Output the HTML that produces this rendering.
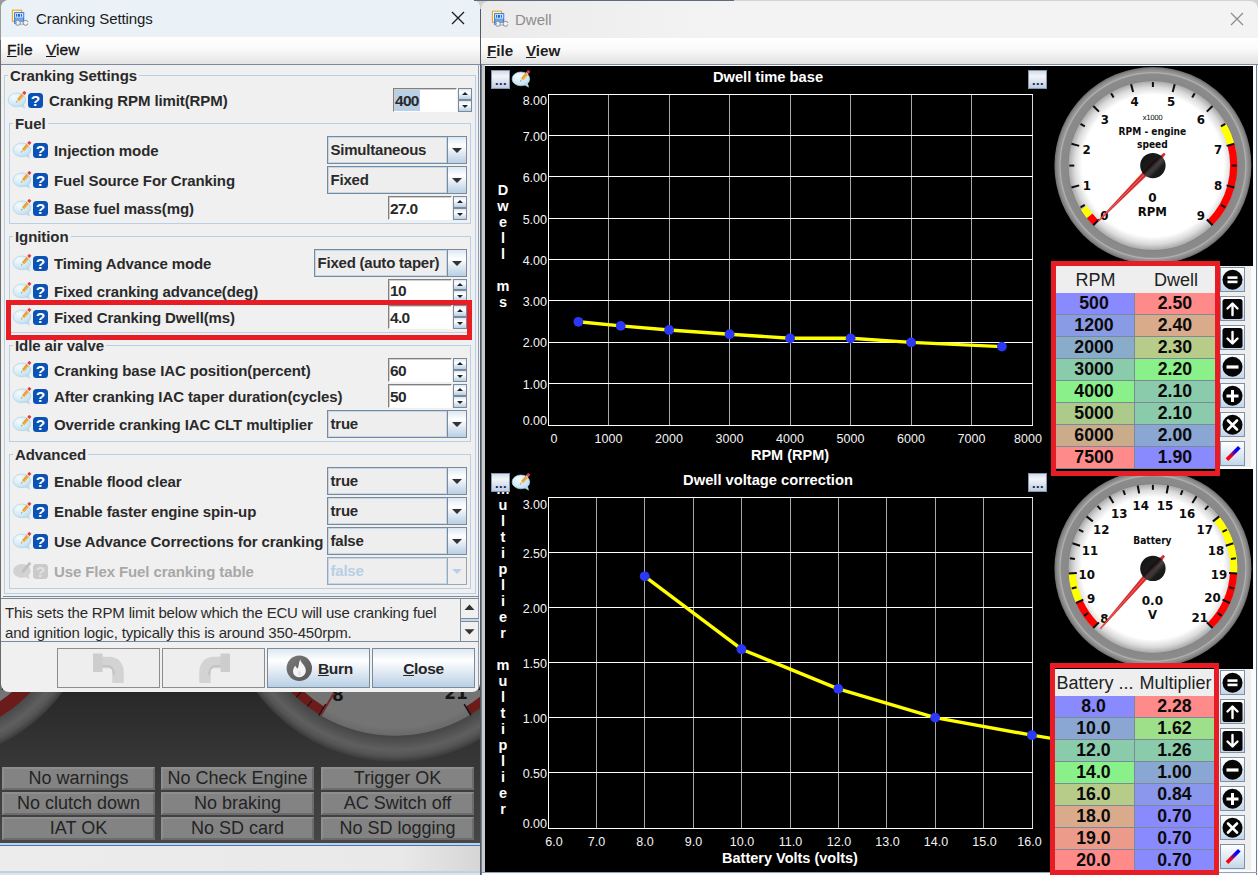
<!DOCTYPE html>
<html lang="en"><head><meta charset="utf-8"><title>Cranking Settings / Dwell</title>
<style>
html,body{margin:0;padding:0;}
body{width:1258px;height:875px;position:relative;overflow:hidden;background:#3a3a3a;font-family:"Liberation Sans",sans-serif;}
.abs{position:absolute;}
.b{font-weight:bold;}
.lbl{position:absolute;font-weight:bold;font-size:15px;color:#2a2a2a;white-space:nowrap;line-height:18px;height:18px;letter-spacing:-0.1px;}
.gt{position:absolute;font-weight:bold;font-size:15px;color:#2a2a2a;white-space:nowrap;line-height:16px;height:16px;background:#f0f0f0;padding:0 2px;letter-spacing:-0.08px;}
.grp{position:absolute;border:1px solid #b8cfe5;box-sizing:border-box;}
.combo{position:absolute;box-sizing:border-box;border:1px solid #7a8a99;background:#eeeeee;font-weight:bold;font-size:15px;color:#2a2a2a;white-space:nowrap;}
.combo .tx{position:absolute;left:2.5px;top:-1px;bottom:1px;display:flex;align-items:center;letter-spacing:-0.22px;}
.combo .ar{position:absolute;box-sizing:border-box;right:0;top:0;bottom:0;width:19px;border-left:1px solid #7a8a99;background:linear-gradient(#dde8f3 0%,#ffffff 33%,#b8cfe5 100%);}
.combo::before{content:'';position:absolute;box-sizing:border-box;left:0;top:0;right:19px;bottom:0;border:1px solid #c3d7ec;}
.combo .ar i{position:absolute;left:4px;top:50%;margin-top:-2px;width:0;height:0;border-left:5px solid transparent;border-right:5px solid transparent;border-top:5px solid #333;}
.combo.dis{color:#b8cfe5;border-color:#9aa8b5;}
.combo.dis .ar{background:#eeeeee;border-left-color:#9aa8b5;}
.combo.dis{border-right-color:#a0a0a0;}
.combo.dis .ar i{border-top-color:#b8cfe5;}
.spin{position:absolute;box-sizing:border-box;background:#fff;border-top:1px solid #808080;border-left:1px solid #808080;border-right:1px solid #fdfdfd;border-bottom:1px solid #fdfdfd;box-shadow:inset 1px 1px 0 #cfcfcf;font-weight:bold;font-size:15.5px;color:#2a2a2a;white-space:nowrap;}
.spin span{position:absolute;left:1px;top:1px;bottom:0;display:flex;align-items:center;padding:0 1px 0 0;letter-spacing:-0.7px;}
.spin span.sel{background:#b8cfe5;}
.sb{position:absolute;box-sizing:border-box;border:1px solid #7a8a99;background:linear-gradient(#dde8f3 0%,#ffffff 35%,#b8cfe5 100%);}
.sb i{position:absolute;left:50%;top:50%;width:0;height:0;margin-left:-3px;border-left:3px solid transparent;border-right:3px solid transparent;}
.sb.up i{margin-top:-2px;border-bottom:3.5px solid #222;}
.sb.dn i{margin-top:-1.5px;border-top:3.5px solid #222;}
.ind{position:absolute;box-sizing:border-box;background:#838383;border:2px solid #6c6c6c;border-top-color:#8e8e8e;border-left-color:#8e8e8e;color:#242424;font-size:18px;text-align:center;white-space:nowrap;line-height:18px;}
.axl{position:absolute;color:#f4f4f4;font-size:12.5px;white-space:nowrap;line-height:16px;}
.ct{position:absolute;color:#fff;font-weight:bold;font-size:14.7px;white-space:nowrap;line-height:16px;text-align:center;}
.vl{position:absolute;color:#fff;font-weight:bold;font-size:14.5px;width:20px;line-height:20px;writing-mode:vertical-rl;text-orientation:upright;white-space:pre;}
.dots{position:absolute;box-sizing:border-box;width:19px;height:19px;border:1px solid #8499b1;background:linear-gradient(#d2dce8 0%,#f2f5f9 30%,#bfcee0 100%);color:#1a1a50;font-weight:bold;font-size:13px;line-height:19px;text-align:center;letter-spacing:0.4px;text-indent:1px;}
.tbl{position:absolute;box-sizing:border-box;border:4px solid #e81c24;background:#eeeeee;}
.th{position:absolute;font-size:18px;color:#222;text-align:center;white-space:nowrap;line-height:29px;height:27px;}
.td{position:absolute;box-sizing:border-box;font-weight:bold;font-size:17.7px;color:#0a0a0a;text-align:center;white-space:nowrap;line-height:21px;height:22px;border-bottom:1px solid #7a8a99;}
.tb{position:absolute;box-sizing:border-box;width:25px;height:25px;border:1px solid #7d92a9;background:linear-gradient(#ffffff,#c4d6ea);}
</style></head><body>
<div class="abs" style="left:0;top:0;width:481px;height:843px;background:linear-gradient(#161616 0px,#262626 690px,#2a2a2a 700px,#474747 843px);"></div>
<svg class="abs" style="left:0;top:690px" width="481" height="153" viewBox="0 690 481 153"><defs><radialGradient id="r1" cx="395" cy="589.5" r="172.5" gradientUnits="userSpaceOnUse"><stop offset="0.80" stop-color="#747474"/><stop offset="0.845" stop-color="#6a6a6a"/><stop offset="0.85" stop-color="#474747"/><stop offset="0.885" stop-color="#515151"/><stop offset="0.93" stop-color="#5f5f5f"/><stop offset="0.965" stop-color="#545454"/><stop offset="1" stop-color="#3a3a3a"/></radialGradient><radialGradient id="r2" cx="-76" cy="589.5" r="172.5" gradientUnits="userSpaceOnUse"><stop offset="0.80" stop-color="#747474"/><stop offset="0.845" stop-color="#6a6a6a"/><stop offset="0.85" stop-color="#474747"/><stop offset="0.885" stop-color="#515151"/><stop offset="0.93" stop-color="#5f5f5f"/><stop offset="0.965" stop-color="#545454"/><stop offset="1" stop-color="#3a3a3a"/></radialGradient></defs><circle cx="395" cy="589.5" r="172.5" fill="url(#r1)"/><circle cx="-76" cy="589.5" r="172.5" fill="url(#r2)"/><path d="M35.5 676.6 A141.5 141.5 0 0 1 -39.4 726.2" fill="none" stroke="#6c1b1b" stroke-width="13"/><path d="M289.8 684.2 A141.5 141.5 0 0 0 321.9 710.7" fill="none" stroke="#6c1b1b" stroke-width="9.5"/><path d="M509.5 672.7 A141.5 141.5 0 0 1 468.1 710.7" fill="none" stroke="#6c1b1b" stroke-width="9.5"/><line x1="325.8" y1="704.2" x2="319.1" y2="715.4" stroke="#141414" stroke-width="1.6"/><line x1="464.2" y1="704.2" x2="470.9" y2="715.4" stroke="#141414" stroke-width="1.6"/><line x1="311.7" y1="700.8" x2="307.5" y2="706.4" stroke="#141414" stroke-width="1.2"/><line x1="301.1" y1="692.0" x2="296.4" y2="697.1" stroke="#141414" stroke-width="1.2"/><line x1="344.2" y1="675.7" x2="320.9" y2="715.3" stroke="#7a2626" stroke-width="2"/><text x="456" y="699.4" font-family="DejaVu Sans, sans-serif" font-weight="bold" font-size="17" text-anchor="middle" fill="#161616">21</text><text x="338" y="701" font-family="DejaVu Sans, sans-serif" font-weight="bold" font-size="17" text-anchor="middle" fill="#161616">8</text></svg>
<div class="ind" style="left:2px;top:767px;width:153px;height:23px;">No warnings</div>
<div class="ind" style="left:161px;top:767px;width:153px;height:23px;">No Check Engine</div>
<div class="ind" style="left:321px;top:767px;width:153px;height:23px;">Trigger OK</div>
<div class="ind" style="left:2px;top:792px;width:153px;height:23px;">No clutch down</div>
<div class="ind" style="left:161px;top:792px;width:153px;height:23px;">No braking</div>
<div class="ind" style="left:321px;top:792px;width:153px;height:23px;">AC Switch off</div>
<div class="ind" style="left:2px;top:817px;width:153px;height:23px;">IAT OK</div>
<div class="ind" style="left:161px;top:817px;width:153px;height:23px;">No SD card</div>
<div class="ind" style="left:321px;top:817px;width:153px;height:23px;">No SD logging</div>
<div class="abs" style="left:0;top:843px;width:481px;height:32px;background:linear-gradient(90deg,#ececec 0,#e9e9e9 400px,#d6d6d6 480px);border-top:2px solid #bcd2ea;box-sizing:border-box;"></div>
<div class="abs" style="left:0;top:845px;width:481px;height:1px;background:#4f73ad;"></div>
<div class="abs" style="left:0;top:871px;width:481px;height:2px;background:#bcd2ea;"></div>
<div class="abs" style="left:0;top:873px;width:481px;height:2px;background:#e2e2e2;"></div>
<div class="abs" style="left:466px;top:0;width:30px;height:14px;background:#cfcfcf;"></div>
<div class="abs" style="left:0;top:0;width:12px;height:40px;background:#9a9a9a;"></div>
<div class="abs" style="left:0;top:40px;width:2px;height:650px;background:#6a6a6a;"></div>
<div id="win1" class="abs" style="left:1px;top:0;width:479px;height:692px;background:#f0f0f0;border-radius:8px 8px 8px 8px;overflow:hidden;">
<div class="abs" style="left:0;top:0;width:479px;height:37px;background:#eaf2f8;"></div>
<svg class="abs" style="left:10px;top:9px" width="19" height="18" viewBox="0 0 19 18"><rect x="1.4" y="1.2" width="9.2" height="11.2" fill="#fdf3d4" stroke="#dcaa38" stroke-width="1.1"/><rect x="3.2" y="3.2" width="10" height="11.8" fill="#1c6ad8"/><rect x="4.1" y="4.1" width="8.2" height="10" fill="#6ea6ee"/><rect x="4.1" y="4.1" width="8.2" height="4.4" fill="#d4e5fa"/><rect x="5.1" y="5" width="1.1" height="2.7" fill="#1c5fc4"/><rect x="7" y="5" width="1.9" height="2.7" fill="#1c5fc4"/><rect x="9.9" y="5" width="1" height="2.7" fill="#1c5fc4"/><path d="M7.2 13.8 L14.4 13.8" stroke="#868c94" stroke-width="3.2"/><path d="M7.2 13.8 L14.4 13.8" stroke="#f4f4f4" stroke-width="1.7"/><circle cx="6.8" cy="13.8" r="2.5" fill="#f2f2f2" stroke="#868c94" stroke-width="1"/><circle cx="14.6" cy="13.8" r="2.5" fill="#f2f2f2" stroke="#868c94" stroke-width="1"/><rect x="3.4" y="13.1" width="2.6" height="1.4" fill="#6ea6ee"/><rect x="15.4" y="13.1" width="2.6" height="1.4" fill="#eef2f6"/></svg>
<div class="abs" style="left:35px;top:9px;font-size:15px;line-height:20px;color:#1b1b1b;white-space:nowrap;letter-spacing:-0.1px;">Cranking Settings</div>
<svg class="abs" style="left:450px;top:11px" width="14" height="14" viewBox="0 0 14 14"><path d="M1 1 L13 13 M13 1 L1 13" stroke="#1b1b1b" stroke-width="1.3" fill="none"/></svg>
<div class="abs" style="left:0;top:37px;width:479px;height:28px;background:linear-gradient(#ffffff 0%,#fbfbfb 40%,#e4e4e4 100%);border-bottom:1px solid #7c8aa0;box-sizing:border-box;"></div>
<div class="abs" style="left:6px;top:40px;font-size:15.5px;line-height:20px;color:#141414;white-space:nowrap;-webkit-text-stroke:0.3px #141414;letter-spacing:0.2px;"><u>F</u>ile</div>
<div class="abs" style="left:45px;top:40px;font-size:15.5px;line-height:20px;color:#141414;white-space:nowrap;-webkit-text-stroke:0.3px #141414;"><u>V</u>iew</div>
<div class="abs" style="left:477px;top:64px;width:1px;height:628px;background:#8a9db5;"></div>
<div class="grp" style="left:3px;top:75px;width:472px;height:519px;"></div><div class="gt" style="left:7px;top:68px;">Cranking Settings</div>
<div class="grp" style="left:8px;top:123px;width:462px;height:101px;"></div><div class="gt" style="left:12px;top:116px;">Fuel</div>
<div class="grp" style="left:8px;top:236px;width:462px;height:97px;"></div><div class="gt" style="left:12px;top:229px;">Ignition</div>
<div class="grp" style="left:8px;top:345px;width:462px;height:97px;"></div><div class="gt" style="left:12px;top:338px;">Idle air valve</div>
<div class="grp" style="left:8px;top:454px;width:462px;height:135px;"></div><div class="gt" style="left:12px;top:447px;">Advanced</div>
<svg class="abs" style="left:6px;top:91px" width="21" height="18" viewBox="0 0 21 18"><defs><radialGradient id="bb" cx="0.35" cy="0.3" r="0.8"><stop offset="0" stop-color="#f4fbfe"/><stop offset="0.6" stop-color="#d2eaf8"/><stop offset="1" stop-color="#b9dcef"/></radialGradient></defs><path d="M13 14.6 L17.6 17.2 L16.4 12.5 Z" fill="#bfe0f0" stroke="#aed3e2" stroke-width="0.5"/><ellipse cx="9.9" cy="8.9" rx="8.8" ry="6.9" fill="url(#bb)" stroke="#aed3e2" stroke-width="0.7"/><path d="M9.3 11.4 L12.38 10.08 L10.10 8.14 Z" fill="#f2d7a6"/><path d="M9.3 11.4 L10.33 10.96 L9.57 10.31 Z" fill="#444"/><path d="M12.38 10.08 L16.91 4.75 L14.63 2.81 L10.10 8.14 Z" fill="#f09a1c"/><path d="M11.6 9.4 L16.1 4.1" stroke="#f8c060" stroke-width="0.8"/><path d="M16.91 4.75 L17.56 3.99 L15.28 2.05 L14.63 2.81 Z" fill="#d8e4ec"/><path d="M17.56 3.99 L19.43 1.78 L17.15 -0.16 L15.28 2.05 Z" fill="#e23a44"/></svg><div class="abs" style="left:27px;top:93px;width:15px;height:15px;border-radius:3.5px;background:#0a52b4;color:#ffffff;font-weight:bold;font-size:15.5px;line-height:16px;text-align:center;">?</div><div class="lbl" style="left:48px;top:92px;">Cranking RPM limit(RPM)</div>
<div class="spin" style="left:392px;top:88px;width:64px;height:24px;"><span class="sel">400</span></div><div class="sb up" style="left:457px;top:88px;width:14px;height:12px;"><i></i></div><div class="sb dn" style="left:457px;top:100px;width:14px;height:12px;"><i></i></div>
<svg class="abs" style="left:11px;top:141px" width="21" height="18" viewBox="0 0 21 18"><defs><radialGradient id="bb" cx="0.35" cy="0.3" r="0.8"><stop offset="0" stop-color="#f4fbfe"/><stop offset="0.6" stop-color="#d2eaf8"/><stop offset="1" stop-color="#b9dcef"/></radialGradient></defs><path d="M13 14.6 L17.6 17.2 L16.4 12.5 Z" fill="#bfe0f0" stroke="#aed3e2" stroke-width="0.5"/><ellipse cx="9.9" cy="8.9" rx="8.8" ry="6.9" fill="url(#bb)" stroke="#aed3e2" stroke-width="0.7"/><path d="M9.3 11.4 L12.38 10.08 L10.10 8.14 Z" fill="#f2d7a6"/><path d="M9.3 11.4 L10.33 10.96 L9.57 10.31 Z" fill="#444"/><path d="M12.38 10.08 L16.91 4.75 L14.63 2.81 L10.10 8.14 Z" fill="#f09a1c"/><path d="M11.6 9.4 L16.1 4.1" stroke="#f8c060" stroke-width="0.8"/><path d="M16.91 4.75 L17.56 3.99 L15.28 2.05 L14.63 2.81 Z" fill="#d8e4ec"/><path d="M17.56 3.99 L19.43 1.78 L17.15 -0.16 L15.28 2.05 Z" fill="#e23a44"/></svg><div class="abs" style="left:32px;top:143px;width:15px;height:15px;border-radius:3.5px;background:#0a52b4;color:#ffffff;font-weight:bold;font-size:15.5px;line-height:16px;text-align:center;">?</div><div class="lbl" style="left:53px;top:142px;">Injection mode</div>
<div class="combo" style="left:326px;top:136px;width:140px;height:28px;"><div class="tx">Simultaneous</div><div class="ar"><i></i></div></div>
<svg class="abs" style="left:11px;top:171px" width="21" height="18" viewBox="0 0 21 18"><defs><radialGradient id="bb" cx="0.35" cy="0.3" r="0.8"><stop offset="0" stop-color="#f4fbfe"/><stop offset="0.6" stop-color="#d2eaf8"/><stop offset="1" stop-color="#b9dcef"/></radialGradient></defs><path d="M13 14.6 L17.6 17.2 L16.4 12.5 Z" fill="#bfe0f0" stroke="#aed3e2" stroke-width="0.5"/><ellipse cx="9.9" cy="8.9" rx="8.8" ry="6.9" fill="url(#bb)" stroke="#aed3e2" stroke-width="0.7"/><path d="M9.3 11.4 L12.38 10.08 L10.10 8.14 Z" fill="#f2d7a6"/><path d="M9.3 11.4 L10.33 10.96 L9.57 10.31 Z" fill="#444"/><path d="M12.38 10.08 L16.91 4.75 L14.63 2.81 L10.10 8.14 Z" fill="#f09a1c"/><path d="M11.6 9.4 L16.1 4.1" stroke="#f8c060" stroke-width="0.8"/><path d="M16.91 4.75 L17.56 3.99 L15.28 2.05 L14.63 2.81 Z" fill="#d8e4ec"/><path d="M17.56 3.99 L19.43 1.78 L17.15 -0.16 L15.28 2.05 Z" fill="#e23a44"/></svg><div class="abs" style="left:32px;top:173px;width:15px;height:15px;border-radius:3.5px;background:#0a52b4;color:#ffffff;font-weight:bold;font-size:15.5px;line-height:16px;text-align:center;">?</div><div class="lbl" style="left:53px;top:172px;">Fuel Source For Cranking</div>
<div class="combo" style="left:326px;top:166px;width:140px;height:28px;"><div class="tx">Fixed</div><div class="ar"><i></i></div></div>
<svg class="abs" style="left:11px;top:199px" width="21" height="18" viewBox="0 0 21 18"><defs><radialGradient id="bb" cx="0.35" cy="0.3" r="0.8"><stop offset="0" stop-color="#f4fbfe"/><stop offset="0.6" stop-color="#d2eaf8"/><stop offset="1" stop-color="#b9dcef"/></radialGradient></defs><path d="M13 14.6 L17.6 17.2 L16.4 12.5 Z" fill="#bfe0f0" stroke="#aed3e2" stroke-width="0.5"/><ellipse cx="9.9" cy="8.9" rx="8.8" ry="6.9" fill="url(#bb)" stroke="#aed3e2" stroke-width="0.7"/><path d="M9.3 11.4 L12.38 10.08 L10.10 8.14 Z" fill="#f2d7a6"/><path d="M9.3 11.4 L10.33 10.96 L9.57 10.31 Z" fill="#444"/><path d="M12.38 10.08 L16.91 4.75 L14.63 2.81 L10.10 8.14 Z" fill="#f09a1c"/><path d="M11.6 9.4 L16.1 4.1" stroke="#f8c060" stroke-width="0.8"/><path d="M16.91 4.75 L17.56 3.99 L15.28 2.05 L14.63 2.81 Z" fill="#d8e4ec"/><path d="M17.56 3.99 L19.43 1.78 L17.15 -0.16 L15.28 2.05 Z" fill="#e23a44"/></svg><div class="abs" style="left:32px;top:201px;width:15px;height:15px;border-radius:3.5px;background:#0a52b4;color:#ffffff;font-weight:bold;font-size:15.5px;line-height:16px;text-align:center;">?</div><div class="lbl" style="left:53px;top:200px;">Base fuel mass(mg)</div>
<div class="spin" style="left:387px;top:196px;width:64px;height:24px;"><span>27.0</span></div><div class="sb up" style="left:452px;top:196px;width:14px;height:12px;"><i></i></div><div class="sb dn" style="left:452px;top:208px;width:14px;height:12px;"><i></i></div>
<svg class="abs" style="left:11px;top:254px" width="21" height="18" viewBox="0 0 21 18"><defs><radialGradient id="bb" cx="0.35" cy="0.3" r="0.8"><stop offset="0" stop-color="#f4fbfe"/><stop offset="0.6" stop-color="#d2eaf8"/><stop offset="1" stop-color="#b9dcef"/></radialGradient></defs><path d="M13 14.6 L17.6 17.2 L16.4 12.5 Z" fill="#bfe0f0" stroke="#aed3e2" stroke-width="0.5"/><ellipse cx="9.9" cy="8.9" rx="8.8" ry="6.9" fill="url(#bb)" stroke="#aed3e2" stroke-width="0.7"/><path d="M9.3 11.4 L12.38 10.08 L10.10 8.14 Z" fill="#f2d7a6"/><path d="M9.3 11.4 L10.33 10.96 L9.57 10.31 Z" fill="#444"/><path d="M12.38 10.08 L16.91 4.75 L14.63 2.81 L10.10 8.14 Z" fill="#f09a1c"/><path d="M11.6 9.4 L16.1 4.1" stroke="#f8c060" stroke-width="0.8"/><path d="M16.91 4.75 L17.56 3.99 L15.28 2.05 L14.63 2.81 Z" fill="#d8e4ec"/><path d="M17.56 3.99 L19.43 1.78 L17.15 -0.16 L15.28 2.05 Z" fill="#e23a44"/></svg><div class="abs" style="left:32px;top:256px;width:15px;height:15px;border-radius:3.5px;background:#0a52b4;color:#ffffff;font-weight:bold;font-size:15.5px;line-height:16px;text-align:center;">?</div><div class="lbl" style="left:53px;top:255px;">Timing Advance mode</div>
<div class="combo" style="left:313px;top:249px;width:153px;height:28px;"><div class="tx">Fixed (auto taper)</div><div class="ar"><i></i></div></div>
<svg class="abs" style="left:11px;top:282px" width="21" height="18" viewBox="0 0 21 18"><defs><radialGradient id="bb" cx="0.35" cy="0.3" r="0.8"><stop offset="0" stop-color="#f4fbfe"/><stop offset="0.6" stop-color="#d2eaf8"/><stop offset="1" stop-color="#b9dcef"/></radialGradient></defs><path d="M13 14.6 L17.6 17.2 L16.4 12.5 Z" fill="#bfe0f0" stroke="#aed3e2" stroke-width="0.5"/><ellipse cx="9.9" cy="8.9" rx="8.8" ry="6.9" fill="url(#bb)" stroke="#aed3e2" stroke-width="0.7"/><path d="M9.3 11.4 L12.38 10.08 L10.10 8.14 Z" fill="#f2d7a6"/><path d="M9.3 11.4 L10.33 10.96 L9.57 10.31 Z" fill="#444"/><path d="M12.38 10.08 L16.91 4.75 L14.63 2.81 L10.10 8.14 Z" fill="#f09a1c"/><path d="M11.6 9.4 L16.1 4.1" stroke="#f8c060" stroke-width="0.8"/><path d="M16.91 4.75 L17.56 3.99 L15.28 2.05 L14.63 2.81 Z" fill="#d8e4ec"/><path d="M17.56 3.99 L19.43 1.78 L17.15 -0.16 L15.28 2.05 Z" fill="#e23a44"/></svg><div class="abs" style="left:32px;top:284px;width:15px;height:15px;border-radius:3.5px;background:#0a52b4;color:#ffffff;font-weight:bold;font-size:15.5px;line-height:16px;text-align:center;">?</div><div class="lbl" style="left:53px;top:283px;">Fixed cranking advance(deg)</div>
<div class="spin" style="left:387px;top:279px;width:64px;height:23px;"><span>10</span></div><div class="sb up" style="left:452px;top:279px;width:14px;height:11px;"><i></i></div><div class="sb dn" style="left:452px;top:290px;width:14px;height:12px;"><i></i></div>
<svg class="abs" style="left:11px;top:308px" width="21" height="18" viewBox="0 0 21 18"><defs><radialGradient id="bb" cx="0.35" cy="0.3" r="0.8"><stop offset="0" stop-color="#f4fbfe"/><stop offset="0.6" stop-color="#d2eaf8"/><stop offset="1" stop-color="#b9dcef"/></radialGradient></defs><path d="M13 14.6 L17.6 17.2 L16.4 12.5 Z" fill="#bfe0f0" stroke="#aed3e2" stroke-width="0.5"/><ellipse cx="9.9" cy="8.9" rx="8.8" ry="6.9" fill="url(#bb)" stroke="#aed3e2" stroke-width="0.7"/><path d="M9.3 11.4 L12.38 10.08 L10.10 8.14 Z" fill="#f2d7a6"/><path d="M9.3 11.4 L10.33 10.96 L9.57 10.31 Z" fill="#444"/><path d="M12.38 10.08 L16.91 4.75 L14.63 2.81 L10.10 8.14 Z" fill="#f09a1c"/><path d="M11.6 9.4 L16.1 4.1" stroke="#f8c060" stroke-width="0.8"/><path d="M16.91 4.75 L17.56 3.99 L15.28 2.05 L14.63 2.81 Z" fill="#d8e4ec"/><path d="M17.56 3.99 L19.43 1.78 L17.15 -0.16 L15.28 2.05 Z" fill="#e23a44"/></svg><div class="abs" style="left:32px;top:310px;width:15px;height:15px;border-radius:3.5px;background:#0a52b4;color:#ffffff;font-weight:bold;font-size:15.5px;line-height:16px;text-align:center;">?</div><div class="lbl" style="left:53px;top:309px;">Fixed Cranking Dwell(ms)</div>
<div class="spin" style="left:387px;top:305px;width:64px;height:24px;"><span>4.0</span></div><div class="sb up" style="left:452px;top:305px;width:14px;height:12px;"><i></i></div><div class="sb dn" style="left:452px;top:317px;width:14px;height:12px;"><i></i></div>
<div class="abs" style="left:5px;top:300px;width:466px;height:40px;box-sizing:border-box;border:5px solid #e81c24;"></div>
<svg class="abs" style="left:11px;top:361px" width="21" height="18" viewBox="0 0 21 18"><defs><radialGradient id="bb" cx="0.35" cy="0.3" r="0.8"><stop offset="0" stop-color="#f4fbfe"/><stop offset="0.6" stop-color="#d2eaf8"/><stop offset="1" stop-color="#b9dcef"/></radialGradient></defs><path d="M13 14.6 L17.6 17.2 L16.4 12.5 Z" fill="#bfe0f0" stroke="#aed3e2" stroke-width="0.5"/><ellipse cx="9.9" cy="8.9" rx="8.8" ry="6.9" fill="url(#bb)" stroke="#aed3e2" stroke-width="0.7"/><path d="M9.3 11.4 L12.38 10.08 L10.10 8.14 Z" fill="#f2d7a6"/><path d="M9.3 11.4 L10.33 10.96 L9.57 10.31 Z" fill="#444"/><path d="M12.38 10.08 L16.91 4.75 L14.63 2.81 L10.10 8.14 Z" fill="#f09a1c"/><path d="M11.6 9.4 L16.1 4.1" stroke="#f8c060" stroke-width="0.8"/><path d="M16.91 4.75 L17.56 3.99 L15.28 2.05 L14.63 2.81 Z" fill="#d8e4ec"/><path d="M17.56 3.99 L19.43 1.78 L17.15 -0.16 L15.28 2.05 Z" fill="#e23a44"/></svg><div class="abs" style="left:32px;top:363px;width:15px;height:15px;border-radius:3.5px;background:#0a52b4;color:#ffffff;font-weight:bold;font-size:15.5px;line-height:16px;text-align:center;">?</div><div class="lbl" style="left:53px;top:362px;">Cranking base IAC position(percent)</div>
<div class="spin" style="left:387px;top:358px;width:64px;height:24px;"><span>60</span></div><div class="sb up" style="left:452px;top:358px;width:14px;height:12px;"><i></i></div><div class="sb dn" style="left:452px;top:370px;width:14px;height:12px;"><i></i></div>
<svg class="abs" style="left:11px;top:387px" width="21" height="18" viewBox="0 0 21 18"><defs><radialGradient id="bb" cx="0.35" cy="0.3" r="0.8"><stop offset="0" stop-color="#f4fbfe"/><stop offset="0.6" stop-color="#d2eaf8"/><stop offset="1" stop-color="#b9dcef"/></radialGradient></defs><path d="M13 14.6 L17.6 17.2 L16.4 12.5 Z" fill="#bfe0f0" stroke="#aed3e2" stroke-width="0.5"/><ellipse cx="9.9" cy="8.9" rx="8.8" ry="6.9" fill="url(#bb)" stroke="#aed3e2" stroke-width="0.7"/><path d="M9.3 11.4 L12.38 10.08 L10.10 8.14 Z" fill="#f2d7a6"/><path d="M9.3 11.4 L10.33 10.96 L9.57 10.31 Z" fill="#444"/><path d="M12.38 10.08 L16.91 4.75 L14.63 2.81 L10.10 8.14 Z" fill="#f09a1c"/><path d="M11.6 9.4 L16.1 4.1" stroke="#f8c060" stroke-width="0.8"/><path d="M16.91 4.75 L17.56 3.99 L15.28 2.05 L14.63 2.81 Z" fill="#d8e4ec"/><path d="M17.56 3.99 L19.43 1.78 L17.15 -0.16 L15.28 2.05 Z" fill="#e23a44"/></svg><div class="abs" style="left:32px;top:389px;width:15px;height:15px;border-radius:3.5px;background:#0a52b4;color:#ffffff;font-weight:bold;font-size:15.5px;line-height:16px;text-align:center;">?</div><div class="lbl" style="left:53px;top:388px;">After cranking IAC taper duration(cycles)</div>
<div class="spin" style="left:387px;top:384px;width:64px;height:24px;"><span>50</span></div><div class="sb up" style="left:452px;top:384px;width:14px;height:12px;"><i></i></div><div class="sb dn" style="left:452px;top:396px;width:14px;height:12px;"><i></i></div>
<svg class="abs" style="left:11px;top:415px" width="21" height="18" viewBox="0 0 21 18"><defs><radialGradient id="bb" cx="0.35" cy="0.3" r="0.8"><stop offset="0" stop-color="#f4fbfe"/><stop offset="0.6" stop-color="#d2eaf8"/><stop offset="1" stop-color="#b9dcef"/></radialGradient></defs><path d="M13 14.6 L17.6 17.2 L16.4 12.5 Z" fill="#bfe0f0" stroke="#aed3e2" stroke-width="0.5"/><ellipse cx="9.9" cy="8.9" rx="8.8" ry="6.9" fill="url(#bb)" stroke="#aed3e2" stroke-width="0.7"/><path d="M9.3 11.4 L12.38 10.08 L10.10 8.14 Z" fill="#f2d7a6"/><path d="M9.3 11.4 L10.33 10.96 L9.57 10.31 Z" fill="#444"/><path d="M12.38 10.08 L16.91 4.75 L14.63 2.81 L10.10 8.14 Z" fill="#f09a1c"/><path d="M11.6 9.4 L16.1 4.1" stroke="#f8c060" stroke-width="0.8"/><path d="M16.91 4.75 L17.56 3.99 L15.28 2.05 L14.63 2.81 Z" fill="#d8e4ec"/><path d="M17.56 3.99 L19.43 1.78 L17.15 -0.16 L15.28 2.05 Z" fill="#e23a44"/></svg><div class="abs" style="left:32px;top:417px;width:15px;height:15px;border-radius:3.5px;background:#0a52b4;color:#ffffff;font-weight:bold;font-size:15.5px;line-height:16px;text-align:center;">?</div><div class="lbl" style="left:53px;top:416px;">Override cranking IAC CLT multiplier</div>
<div class="combo" style="left:326px;top:410px;width:140px;height:28px;"><div class="tx">true</div><div class="ar"><i></i></div></div>
<svg class="abs" style="left:11px;top:472px" width="21" height="18" viewBox="0 0 21 18"><defs><radialGradient id="bb" cx="0.35" cy="0.3" r="0.8"><stop offset="0" stop-color="#f4fbfe"/><stop offset="0.6" stop-color="#d2eaf8"/><stop offset="1" stop-color="#b9dcef"/></radialGradient></defs><path d="M13 14.6 L17.6 17.2 L16.4 12.5 Z" fill="#bfe0f0" stroke="#aed3e2" stroke-width="0.5"/><ellipse cx="9.9" cy="8.9" rx="8.8" ry="6.9" fill="url(#bb)" stroke="#aed3e2" stroke-width="0.7"/><path d="M9.3 11.4 L12.38 10.08 L10.10 8.14 Z" fill="#f2d7a6"/><path d="M9.3 11.4 L10.33 10.96 L9.57 10.31 Z" fill="#444"/><path d="M12.38 10.08 L16.91 4.75 L14.63 2.81 L10.10 8.14 Z" fill="#f09a1c"/><path d="M11.6 9.4 L16.1 4.1" stroke="#f8c060" stroke-width="0.8"/><path d="M16.91 4.75 L17.56 3.99 L15.28 2.05 L14.63 2.81 Z" fill="#d8e4ec"/><path d="M17.56 3.99 L19.43 1.78 L17.15 -0.16 L15.28 2.05 Z" fill="#e23a44"/></svg><div class="abs" style="left:32px;top:474px;width:15px;height:15px;border-radius:3.5px;background:#0a52b4;color:#ffffff;font-weight:bold;font-size:15.5px;line-height:16px;text-align:center;">?</div><div class="lbl" style="left:53px;top:473px;">Enable flood clear</div>
<div class="combo" style="left:326px;top:467px;width:140px;height:28px;"><div class="tx">true</div><div class="ar"><i></i></div></div>
<svg class="abs" style="left:11px;top:502px" width="21" height="18" viewBox="0 0 21 18"><defs><radialGradient id="bb" cx="0.35" cy="0.3" r="0.8"><stop offset="0" stop-color="#f4fbfe"/><stop offset="0.6" stop-color="#d2eaf8"/><stop offset="1" stop-color="#b9dcef"/></radialGradient></defs><path d="M13 14.6 L17.6 17.2 L16.4 12.5 Z" fill="#bfe0f0" stroke="#aed3e2" stroke-width="0.5"/><ellipse cx="9.9" cy="8.9" rx="8.8" ry="6.9" fill="url(#bb)" stroke="#aed3e2" stroke-width="0.7"/><path d="M9.3 11.4 L12.38 10.08 L10.10 8.14 Z" fill="#f2d7a6"/><path d="M9.3 11.4 L10.33 10.96 L9.57 10.31 Z" fill="#444"/><path d="M12.38 10.08 L16.91 4.75 L14.63 2.81 L10.10 8.14 Z" fill="#f09a1c"/><path d="M11.6 9.4 L16.1 4.1" stroke="#f8c060" stroke-width="0.8"/><path d="M16.91 4.75 L17.56 3.99 L15.28 2.05 L14.63 2.81 Z" fill="#d8e4ec"/><path d="M17.56 3.99 L19.43 1.78 L17.15 -0.16 L15.28 2.05 Z" fill="#e23a44"/></svg><div class="abs" style="left:32px;top:504px;width:15px;height:15px;border-radius:3.5px;background:#0a52b4;color:#ffffff;font-weight:bold;font-size:15.5px;line-height:16px;text-align:center;">?</div><div class="lbl" style="left:53px;top:503px;">Enable faster engine spin-up</div>
<div class="combo" style="left:326px;top:497px;width:140px;height:28px;"><div class="tx">true</div><div class="ar"><i></i></div></div>
<svg class="abs" style="left:11px;top:532px" width="21" height="18" viewBox="0 0 21 18"><defs><radialGradient id="bb" cx="0.35" cy="0.3" r="0.8"><stop offset="0" stop-color="#f4fbfe"/><stop offset="0.6" stop-color="#d2eaf8"/><stop offset="1" stop-color="#b9dcef"/></radialGradient></defs><path d="M13 14.6 L17.6 17.2 L16.4 12.5 Z" fill="#bfe0f0" stroke="#aed3e2" stroke-width="0.5"/><ellipse cx="9.9" cy="8.9" rx="8.8" ry="6.9" fill="url(#bb)" stroke="#aed3e2" stroke-width="0.7"/><path d="M9.3 11.4 L12.38 10.08 L10.10 8.14 Z" fill="#f2d7a6"/><path d="M9.3 11.4 L10.33 10.96 L9.57 10.31 Z" fill="#444"/><path d="M12.38 10.08 L16.91 4.75 L14.63 2.81 L10.10 8.14 Z" fill="#f09a1c"/><path d="M11.6 9.4 L16.1 4.1" stroke="#f8c060" stroke-width="0.8"/><path d="M16.91 4.75 L17.56 3.99 L15.28 2.05 L14.63 2.81 Z" fill="#d8e4ec"/><path d="M17.56 3.99 L19.43 1.78 L17.15 -0.16 L15.28 2.05 Z" fill="#e23a44"/></svg><div class="abs" style="left:32px;top:534px;width:15px;height:15px;border-radius:3.5px;background:#0a52b4;color:#ffffff;font-weight:bold;font-size:15.5px;line-height:16px;text-align:center;">?</div><div class="lbl" style="left:53px;top:533px;">Use Advance Corrections for cranking</div>
<div class="combo" style="left:326px;top:527px;width:140px;height:28px;"><div class="tx">false</div><div class="ar"><i></i></div></div>
<svg class="abs" style="left:11px;top:562px" width="21" height="18" viewBox="0 0 21 18"><ellipse cx="9.9" cy="8.9" rx="8.8" ry="6.9" fill="#d2d2d2"/><path d="M13 14.5 L17.6 17.2 L16.4 12.5 Z" fill="#d2d2d2"/><path d="M9.3 11.4 L12.38 10.08 L10.10 8.14 Z M12.38 10.08 L16.91 4.75 L14.63 2.81 L10.10 8.14 Z M16.91 4.75 L17.56 3.99 L15.28 2.05 L14.63 2.81 Z M17.56 3.99 L19.43 1.78 L17.15 -0.16 L15.28 2.05 Z" fill="#c0c0c0"/></svg><div class="abs" style="left:32px;top:564px;width:15px;height:15px;border-radius:3.5px;background:#cacaca;color:#e2e2e2;font-weight:bold;font-size:15.5px;line-height:16px;text-align:center;">?</div><div class="lbl" style="left:53px;top:563px;color:#a8a8a8;">Use Flex Fuel cranking table</div>
<div class="combo dis" style="left:326px;top:557px;width:140px;height:28px;"><div class="tx">false</div><div class="ar"><i></i></div></div>
<div class="abs" style="left:2px;top:596px;width:476px;height:1px;background:#7a8a99;"></div><div class="abs" style="left:0;top:598px;width:478px;height:1px;background:#7a8a99;"></div><div class="abs" style="left:0;top:641px;width:478px;height:1px;background:#7a8a99;"></div><div class="abs" style="left:459px;top:598px;width:1px;height:44px;background:#7a8a99;"></div><div class="abs" style="left:460px;top:618px;width:18px;height:1px;background:#7a8a99;"></div><div class="abs" style="left:460px;top:619px;width:18px;height:2px;background:#c4d6ea;"></div><div class="abs" style="left:460px;top:621px;width:18px;height:1px;background:#7a8a99;"></div>
<svg class="abs" style="left:460px;top:599px" width="18" height="42" viewBox="0 0 18 42"><path d="M3.5 11 L8.5 5.6 L13.5 11 Z M3.5 30.2 L8.5 35.6 L13.5 30.2 Z" fill="#333"/></svg>
<div class="abs" style="left:4px;top:603px;width:452px;font-size:15px;line-height:20px;color:#2a2a2a;white-space:nowrap;letter-spacing:-0.17px;">This sets the RPM limit below which the ECU will use cranking fuel<br>and ignition logic, typically this is around 350-450rpm.</div>
<div class="abs" style="left:56px;top:648px;width:103px;height:40px;box-sizing:border-box;border:1px solid #8c8c8c;background:#eeeeee;"><svg class="abs" style="left:30px;top:0" width="44" height="38" viewBox="30 0 44 38"><path d="M42 13.5 L51 13.5 Q60 13.5 60 24 L60 34" fill="none" stroke="#d3d3d3" stroke-width="11.5"/><rect x="35" y="4.5" width="9.5" height="18.5" fill="#cdcdcd"/><path d="M44.5 17 L50 17 Q55.5 17.5 56 26" fill="none" stroke="#c4c4c4" stroke-width="2"/></svg></div>
<div class="abs" style="left:161px;top:648px;width:103px;height:40px;box-sizing:border-box;border:1px solid #8c8c8c;background:#eeeeee;"><svg class="abs" style="left:30px;top:0" width="44" height="38" viewBox="30 0 44 38"><path d="M60 13.5 L51 13.5 Q42 13.5 42 24 L42 34" fill="none" stroke="#d3d3d3" stroke-width="11.5"/><rect x="57.5" y="4.5" width="9.5" height="18.5" fill="#cdcdcd"/><path d="M57.5 17 L52 17 Q46.5 17.5 46 26" fill="none" stroke="#c4c4c4" stroke-width="2"/></svg></div>
<div class="abs" style="left:266px;top:648px;width:103px;height:40px;box-sizing:border-box;border:1px solid #7a8a99;background:linear-gradient(#dde8f3 0%,#ffffff 30%,#b8cfe5 100%);"><svg class="abs" style="left:18px;top:6px" width="27" height="27" viewBox="0 0 27 27"><defs><linearGradient id="bg1" x1="0" y1="0" x2="1" y2="1"><stop offset="0" stop-color="#7a7a7a"/><stop offset="1" stop-color="#565656"/></linearGradient></defs><circle cx="13.3" cy="13.3" r="12.7" fill="url(#bg1)"/><path d="M14.2 4.2 C14.8 8.2 19.8 10.4 19.8 15.6 C19.8 19.6 17 22.2 13.4 22.2 C9.8 22.2 7 19.8 7 16.2 C7 13.6 8.4 12.2 9.2 10.4 C10 12.2 10.8 13.2 11.8 13.4 C13 11.2 12.6 7.4 14.2 4.2 Z" fill="#f4f4f4"/><path d="M13.4 15.4 C15.2 17.2 15.4 20.2 13.4 21 C11.4 20.2 11.6 17.6 13.4 15.4 Z" fill="#e2e2e2"/></svg><div class="abs b" style="left:50px;top:11px;font-size:15.5px;line-height:18px;color:#262626;white-space:nowrap;letter-spacing:-0.35px;"><u>B</u>urn</div></div>
<div class="abs" style="left:371px;top:648px;width:103px;height:40px;box-sizing:border-box;border:1px solid #7a8a99;background:linear-gradient(#dde8f3 0%,#ffffff 30%,#b8cfe5 100%);"><div class="abs b" style="left:0;top:11px;width:100%;text-align:center;font-size:15.5px;line-height:18px;color:#262626;white-space:nowrap;letter-spacing:-0.3px;"><u>C</u>lose</div></div>
</div>
<div class="abs" style="left:734px;top:0;width:524px;height:12px;background:#d2d2d2;"></div>
<div class="abs" style="left:474px;top:0;width:260px;height:1px;background:#5f6b78;"></div>
<div class="abs" style="left:481px;top:12px;width:777px;height:863px;background:#f0f0f0;"></div>
<div class="abs" style="left:481px;top:1px;width:777px;height:37px;background:linear-gradient(90deg,#ebebeb,#f3f3f3 30%);border-radius:8px 8px 0 0;"></div>
<div class="abs" style="left:480px;top:9px;width:1px;height:866px;background:#555a60;"></div>
<svg class="abs" style="left:491px;top:10px" width="19" height="18" viewBox="0 0 19 18"><rect x="1.4" y="1.2" width="9.2" height="11.2" fill="#fdf3d4" stroke="#dcaa38" stroke-width="1.1"/><rect x="3.2" y="3.2" width="10" height="11.8" fill="#1c6ad8"/><rect x="4.1" y="4.1" width="8.2" height="10" fill="#6ea6ee"/><rect x="4.1" y="4.1" width="8.2" height="4.4" fill="#d4e5fa"/><rect x="5.1" y="5" width="1.1" height="2.7" fill="#1c5fc4"/><rect x="7" y="5" width="1.9" height="2.7" fill="#1c5fc4"/><rect x="9.9" y="5" width="1" height="2.7" fill="#1c5fc4"/><path d="M7.2 13.8 L14.4 13.8" stroke="#868c94" stroke-width="3.2"/><path d="M7.2 13.8 L14.4 13.8" stroke="#f4f4f4" stroke-width="1.7"/><circle cx="6.8" cy="13.8" r="2.5" fill="#f2f2f2" stroke="#868c94" stroke-width="1"/><circle cx="14.6" cy="13.8" r="2.5" fill="#f2f2f2" stroke="#868c94" stroke-width="1"/><rect x="3.4" y="13.1" width="2.6" height="1.4" fill="#6ea6ee"/><rect x="15.4" y="13.1" width="2.6" height="1.4" fill="#eef2f6"/></svg>
<div class="abs" style="left:515px;top:10px;font-size:15px;line-height:20px;color:#8c8c8c;white-space:nowrap;">Dwell</div>
<svg class="abs" style="left:1230px;top:12px" width="14" height="14" viewBox="0 0 14 14"><path d="M1 1 L13 13 M13 1 L1 13" stroke="#8a8a8a" stroke-width="1.2" fill="none"/></svg>
<div class="abs" style="left:481px;top:38px;width:777px;height:27px;background:linear-gradient(#ffffff 0%,#fbfbfb 40%,#e2e2e2 100%);border-bottom:1px solid #7c8aa0;box-sizing:border-box;"></div>
<div class="abs b" style="left:487px;top:41px;font-size:15.2px;line-height:20px;color:#1e1e1e;white-space:nowrap;"><u>F</u>ile</div>
<div class="abs b" style="left:526px;top:41px;font-size:15.2px;line-height:20px;color:#1e1e1e;white-space:nowrap;"><u>V</u>iew</div>
<div class="abs" style="left:481px;top:65px;width:777px;height:810px;background:#fbfbfb;"></div>
<div class="abs" style="left:481px;top:65px;width:1px;height:810px;background:#6f7f92;"></div>
<div class="abs" style="left:482px;top:65px;width:3px;height:807px;background:#cbcbcb;"></div>
<div class="abs" style="left:1256px;top:65px;width:1px;height:810px;background:#6b7f96;"></div>
<div class="abs" style="left:485px;top:66px;width:768px;height:806px;background:#000;"></div>
<div class="abs" style="left:482px;top:872px;width:775px;height:1px;background:#8fa3bd;"></div>
<svg class="abs" style="left:485px;top:66px" width="565" height="406" viewBox="485 66 565 406" shape-rendering="crispEdges"><line x1="548.5" y1="94.5" x2="548.5" y2="425.5" stroke="#ffffff" stroke-width="1"/><line x1="608.5" y1="94.5" x2="608.5" y2="425.5" stroke="#a8a8a8" stroke-width="1"/><line x1="669.5" y1="94.5" x2="669.5" y2="425.5" stroke="#a8a8a8" stroke-width="1"/><line x1="729.5" y1="94.5" x2="729.5" y2="425.5" stroke="#a8a8a8" stroke-width="1"/><line x1="790.5" y1="94.5" x2="790.5" y2="425.5" stroke="#a8a8a8" stroke-width="1"/><line x1="850.5" y1="94.5" x2="850.5" y2="425.5" stroke="#a8a8a8" stroke-width="1"/><line x1="911.5" y1="94.5" x2="911.5" y2="425.5" stroke="#a8a8a8" stroke-width="1"/><line x1="971.5" y1="94.5" x2="971.5" y2="425.5" stroke="#a8a8a8" stroke-width="1"/><line x1="1032.5" y1="94.5" x2="1032.5" y2="425.5" stroke="#d8d8d8" stroke-width="1"/><line x1="548.0" y1="94.5" x2="1033.0" y2="94.5" stroke="#ffffff" stroke-width="1"/><line x1="548.0" y1="135.5" x2="1033.0" y2="135.5" stroke="#ffffff" stroke-width="1"/><line x1="548.0" y1="176.5" x2="1033.0" y2="176.5" stroke="#ffffff" stroke-width="1"/><line x1="548.0" y1="218.5" x2="1033.0" y2="218.5" stroke="#ffffff" stroke-width="1"/><line x1="548.0" y1="259.5" x2="1033.0" y2="259.5" stroke="#ffffff" stroke-width="1"/><line x1="548.0" y1="300.5" x2="1033.0" y2="300.5" stroke="#ffffff" stroke-width="1"/><line x1="548.0" y1="342.5" x2="1033.0" y2="342.5" stroke="#ffffff" stroke-width="1"/><line x1="548.0" y1="383.5" x2="1033.0" y2="383.5" stroke="#ffffff" stroke-width="1"/><line x1="548.0" y1="425.5" x2="1033.0" y2="425.5" stroke="#ffffff" stroke-width="1"/></svg>
<svg class="abs" style="left:485px;top:66px" width="565" height="406" viewBox="485 66 565 406"><path d="M578.4 321.8 L620.7 325.9 L669.1 330.0 L729.6 334.2 L790.1 338.3 L850.6 338.3 L911.1 342.4 L1001.9 346.6" fill="none" stroke="#ffff00" stroke-width="3.4" stroke-linejoin="round"/><circle cx="578.4" cy="321.8" r="4.9" fill="#2b38f7"/><circle cx="620.7" cy="325.9" r="4.9" fill="#2b38f7"/><circle cx="669.1" cy="330.0" r="4.9" fill="#2b38f7"/><circle cx="729.6" cy="334.2" r="4.9" fill="#2b38f7"/><circle cx="790.1" cy="338.3" r="4.9" fill="#2b38f7"/><circle cx="850.6" cy="338.3" r="4.9" fill="#2b38f7"/><circle cx="911.1" cy="342.4" r="4.9" fill="#2b38f7"/><circle cx="1001.9" cy="346.6" r="4.9" fill="#2b38f7"/></svg>
<div class="axl" style="left:497px;width:50px;text-align:right;top:93px;">8.00</div><div class="axl" style="left:497px;width:50px;text-align:right;top:128.5px;">7.00</div><div class="axl" style="left:497px;width:50px;text-align:right;top:169.5px;">6.00</div><div class="axl" style="left:497px;width:50px;text-align:right;top:211.5px;">5.00</div><div class="axl" style="left:497px;width:50px;text-align:right;top:252.5px;">4.00</div><div class="axl" style="left:497px;width:50px;text-align:right;top:293.5px;">3.00</div><div class="axl" style="left:497px;width:50px;text-align:right;top:335px;">2.00</div><div class="axl" style="left:497px;width:50px;text-align:right;top:376.5px;">1.00</div><div class="axl" style="left:497px;width:50px;text-align:right;top:412.5px;">0.00</div>
<div class="axl" style="left:524px;width:60px;text-align:center;top:430.5px;">0</div><div class="axl" style="left:578.5px;width:60px;text-align:center;top:430.5px;">1000</div><div class="axl" style="left:639px;width:60px;text-align:center;top:430.5px;">2000</div><div class="axl" style="left:699.5px;width:60px;text-align:center;top:430.5px;">3000</div><div class="axl" style="left:760px;width:60px;text-align:center;top:430.5px;">4000</div><div class="axl" style="left:820.5px;width:60px;text-align:center;top:430.5px;">5000</div><div class="axl" style="left:881px;width:60px;text-align:center;top:430.5px;">6000</div><div class="axl" style="left:941.5px;width:60px;text-align:center;top:430.5px;">7000</div><div class="axl" style="left:998px;width:60px;text-align:center;top:430.5px;">8000</div>
<div class="ct" style="left:640px;width:300px;top:447.0px;font-size:14.5px;">RPM (RPM)</div><div class="ct" style="left:618px;width:300px;top:69px;">Dwell time base</div>
<div class="vl" style="left:493px;top:182px;">Dwell ms</div>
<div class="dots" style="left:491px;top:70px;">...</div><svg class="abs" style="left:511px;top:70px" width="21" height="18" viewBox="0 0 21 18"><defs><radialGradient id="bb" cx="0.35" cy="0.3" r="0.8"><stop offset="0" stop-color="#f4fbfe"/><stop offset="0.6" stop-color="#d2eaf8"/><stop offset="1" stop-color="#b9dcef"/></radialGradient></defs><path d="M13 14.6 L17.6 17.2 L16.4 12.5 Z" fill="#bfe0f0" stroke="#aed3e2" stroke-width="0.5"/><ellipse cx="9.9" cy="8.9" rx="8.8" ry="6.9" fill="url(#bb)" stroke="#aed3e2" stroke-width="0.7"/><path d="M9.3 11.4 L12.38 10.08 L10.10 8.14 Z" fill="#f2d7a6"/><path d="M9.3 11.4 L10.33 10.96 L9.57 10.31 Z" fill="#444"/><path d="M12.38 10.08 L16.91 4.75 L14.63 2.81 L10.10 8.14 Z" fill="#f09a1c"/><path d="M11.6 9.4 L16.1 4.1" stroke="#f8c060" stroke-width="0.8"/><path d="M16.91 4.75 L17.56 3.99 L15.28 2.05 L14.63 2.81 Z" fill="#d8e4ec"/><path d="M17.56 3.99 L19.43 1.78 L17.15 -0.16 L15.28 2.05 Z" fill="#e23a44"/></svg><div class="dots" style="left:1028px;top:70px;">...</div>
<svg class="abs" style="left:485px;top:469px" width="565" height="406" viewBox="485 469 565 406" shape-rendering="crispEdges"><line x1="548.5" y1="497.5" x2="548.5" y2="828.5" stroke="#ffffff" stroke-width="1"/><line x1="596.5" y1="497.5" x2="596.5" y2="828.5" stroke="#a8a8a8" stroke-width="1"/><line x1="644.5" y1="497.5" x2="644.5" y2="828.5" stroke="#a8a8a8" stroke-width="1"/><line x1="693.5" y1="497.5" x2="693.5" y2="828.5" stroke="#a8a8a8" stroke-width="1"/><line x1="741.5" y1="497.5" x2="741.5" y2="828.5" stroke="#a8a8a8" stroke-width="1"/><line x1="790.5" y1="497.5" x2="790.5" y2="828.5" stroke="#a8a8a8" stroke-width="1"/><line x1="838.5" y1="497.5" x2="838.5" y2="828.5" stroke="#a8a8a8" stroke-width="1"/><line x1="886.5" y1="497.5" x2="886.5" y2="828.5" stroke="#a8a8a8" stroke-width="1"/><line x1="935.5" y1="497.5" x2="935.5" y2="828.5" stroke="#a8a8a8" stroke-width="1"/><line x1="983.5" y1="497.5" x2="983.5" y2="828.5" stroke="#a8a8a8" stroke-width="1"/><line x1="1032.5" y1="497.5" x2="1032.5" y2="828.5" stroke="#d8d8d8" stroke-width="1"/><line x1="548.0" y1="497.5" x2="1033.0" y2="497.5" stroke="#ffffff" stroke-width="1"/><line x1="548.0" y1="552.5" x2="1033.0" y2="552.5" stroke="#ffffff" stroke-width="1"/><line x1="548.0" y1="607.5" x2="1033.0" y2="607.5" stroke="#ffffff" stroke-width="1"/><line x1="548.0" y1="662.5" x2="1033.0" y2="662.5" stroke="#ffffff" stroke-width="1"/><line x1="548.0" y1="717.5" x2="1033.0" y2="717.5" stroke="#ffffff" stroke-width="1"/><line x1="548.0" y1="772.5" x2="1033.0" y2="772.5" stroke="#ffffff" stroke-width="1"/><line x1="548.0" y1="828.5" x2="1033.0" y2="828.5" stroke="#ffffff" stroke-width="1"/></svg>
<svg class="abs" style="left:485px;top:469px" width="565" height="406" viewBox="485 469 565 406"><path d="M644.7 576.3 L741.5 649.2 L838.3 688.9 L935.1 717.6 L1031.9 735.2 L1128.7 750.7" fill="none" stroke="#ffff00" stroke-width="3.4" stroke-linejoin="round"/><circle cx="644.7" cy="576.3" r="4.9" fill="#2b38f7"/><circle cx="741.5" cy="649.2" r="4.9" fill="#2b38f7"/><circle cx="838.3" cy="688.9" r="4.9" fill="#2b38f7"/><circle cx="935.1" cy="717.6" r="4.9" fill="#2b38f7"/><circle cx="1031.9" cy="735.2" r="4.9" fill="#2b38f7"/></svg>
<div class="axl" style="left:497px;width:50px;text-align:right;top:496.5px;">3.00</div><div class="axl" style="left:497px;width:50px;text-align:right;top:545.5px;">2.50</div><div class="axl" style="left:497px;width:50px;text-align:right;top:600.5px;">2.00</div><div class="axl" style="left:497px;width:50px;text-align:right;top:655.5px;">1.50</div><div class="axl" style="left:497px;width:50px;text-align:right;top:710.5px;">1.00</div><div class="axl" style="left:497px;width:50px;text-align:right;top:765.5px;">0.50</div><div class="axl" style="left:497px;width:50px;text-align:right;top:815.5px;">0.00</div>
<div class="axl" style="left:524px;width:60px;text-align:center;top:833.5px;">6.0</div><div class="axl" style="left:566.5px;width:60px;text-align:center;top:833.5px;">7.0</div><div class="axl" style="left:615px;width:60px;text-align:center;top:833.5px;">8.0</div><div class="axl" style="left:663.5px;width:60px;text-align:center;top:833.5px;">9.0</div><div class="axl" style="left:712px;width:60px;text-align:center;top:833.5px;">10.0</div><div class="axl" style="left:760.5px;width:60px;text-align:center;top:833.5px;">11.0</div><div class="axl" style="left:809px;width:60px;text-align:center;top:833.5px;">12.0</div><div class="axl" style="left:857.5px;width:60px;text-align:center;top:833.5px;">13.0</div><div class="axl" style="left:906px;width:60px;text-align:center;top:833.5px;">14.0</div><div class="axl" style="left:954.5px;width:60px;text-align:center;top:833.5px;">15.0</div><div class="axl" style="left:999.5px;width:60px;text-align:center;top:833.5px;">16.0</div>
<div class="ct" style="left:640px;width:300px;top:850.0px;font-size:14.5px;">Battery Volts (volts)</div><div class="ct" style="left:618px;width:300px;top:472px;">Dwell voltage correction</div>
<div class="vl" style="left:493px;top:481px;">multiplier multiplier</div>
<div class="dots" style="left:491px;top:473px;">...</div><svg class="abs" style="left:511px;top:473px" width="21" height="18" viewBox="0 0 21 18"><defs><radialGradient id="bb" cx="0.35" cy="0.3" r="0.8"><stop offset="0" stop-color="#f4fbfe"/><stop offset="0.6" stop-color="#d2eaf8"/><stop offset="1" stop-color="#b9dcef"/></radialGradient></defs><path d="M13 14.6 L17.6 17.2 L16.4 12.5 Z" fill="#bfe0f0" stroke="#aed3e2" stroke-width="0.5"/><ellipse cx="9.9" cy="8.9" rx="8.8" ry="6.9" fill="url(#bb)" stroke="#aed3e2" stroke-width="0.7"/><path d="M9.3 11.4 L12.38 10.08 L10.10 8.14 Z" fill="#f2d7a6"/><path d="M9.3 11.4 L10.33 10.96 L9.57 10.31 Z" fill="#444"/><path d="M12.38 10.08 L16.91 4.75 L14.63 2.81 L10.10 8.14 Z" fill="#f09a1c"/><path d="M11.6 9.4 L16.1 4.1" stroke="#f8c060" stroke-width="0.8"/><path d="M16.91 4.75 L17.56 3.99 L15.28 2.05 L14.63 2.81 Z" fill="#d8e4ec"/><path d="M17.56 3.99 L19.43 1.78 L17.15 -0.16 L15.28 2.05 Z" fill="#e23a44"/></svg><div class="dots" style="left:1028px;top:473px;">...</div>
<svg class="abs" style="left:1052px;top:65px" width="200" height="200" viewBox="1052 65 200 200" font-family="DejaVu Sans, Liberation Sans, sans-serif" font-weight="bold"><defs><radialGradient id="rga" cx="1152.9" cy="165.6" r="98.5" gradientUnits="userSpaceOnUse"><stop offset="0.85" stop-color="#707070"/><stop offset="0.866" stop-color="#898989"/><stop offset="0.93" stop-color="#8b8b8b"/><stop offset="0.943" stop-color="#b2b2b2"/><stop offset="0.954" stop-color="#989898"/><stop offset="0.975" stop-color="#8a8a8a"/><stop offset="1" stop-color="#6a6a6a"/></radialGradient><radialGradient id="fga" cx="1152.9" cy="165.6" r="84.5" gradientUnits="userSpaceOnUse"><stop offset="0" stop-color="#ffffff"/><stop offset="0.84" stop-color="#ffffff"/><stop offset="0.93" stop-color="#dadada"/><stop offset="1" stop-color="#a8a8a8"/></radialGradient><linearGradient id="hga" x1="0" y1="0" x2="1" y2="1"><stop offset="0" stop-color="#000"/><stop offset="0.45" stop-color="#0a0a0a"/><stop offset="0.55" stop-color="#3a3a3a"/><stop offset="0.7" stop-color="#0a0a0a"/><stop offset="1" stop-color="#000"/></linearGradient></defs><circle cx="1152.9" cy="165.6" r="98.5" fill="url(#rga)"/><circle cx="1152.9" cy="165.6" r="84.5" fill="url(#fga)"/><path d="M1095.77 222.73 A80.8 80.8 0 0 1 1089.58 215.79" fill="none" stroke="#ff0000" stroke-width="7.2"/><path d="M1089.58 215.79 A80.8 80.8 0 0 1 1084.01 207.82" fill="none" stroke="#ffff00" stroke-width="7.2"/><path d="M1222.87 125.20 A80.8 80.8 0 0 1 1230.95 144.69" fill="none" stroke="#ffff00" stroke-width="7.2"/><path d="M1230.95 144.69 A80.8 80.8 0 0 1 1210.03 222.73" fill="none" stroke="#ff0000" stroke-width="7.2"/><line x1="1098.95" y1="219.55" x2="1093.29" y2="225.21" stroke="#0c0c0c" stroke-width="2"/><line x1="1084.83" y1="204.90" x2="1080.50" y2="207.40" stroke="#0c0c0c" stroke-width="2"/><line x1="1079.20" y1="185.35" x2="1071.47" y2="187.42" stroke="#0c0c0c" stroke-width="2"/><line x1="1074.30" y1="165.60" x2="1069.30" y2="165.60" stroke="#0c0c0c" stroke-width="2"/><line x1="1079.20" y1="145.85" x2="1071.47" y2="143.78" stroke="#0c0c0c" stroke-width="2"/><line x1="1084.83" y1="126.30" x2="1080.50" y2="123.80" stroke="#0c0c0c" stroke-width="2"/><line x1="1098.95" y1="111.65" x2="1093.29" y2="105.99" stroke="#0c0c0c" stroke-width="2"/><line x1="1113.60" y1="97.53" x2="1111.10" y2="93.20" stroke="#0c0c0c" stroke-width="2"/><line x1="1133.15" y1="91.90" x2="1131.08" y2="84.17" stroke="#0c0c0c" stroke-width="2"/><line x1="1152.90" y1="87.00" x2="1152.90" y2="82.00" stroke="#0c0c0c" stroke-width="2"/><line x1="1172.65" y1="91.90" x2="1174.72" y2="84.17" stroke="#0c0c0c" stroke-width="2"/><line x1="1192.20" y1="97.53" x2="1194.70" y2="93.20" stroke="#0c0c0c" stroke-width="2"/><line x1="1206.85" y1="111.65" x2="1212.51" y2="105.99" stroke="#0c0c0c" stroke-width="2"/><line x1="1220.97" y1="126.30" x2="1225.30" y2="123.80" stroke="#0c0c0c" stroke-width="2"/><line x1="1226.60" y1="145.85" x2="1234.33" y2="143.78" stroke="#0c0c0c" stroke-width="2"/><line x1="1231.50" y1="165.60" x2="1236.50" y2="165.60" stroke="#0c0c0c" stroke-width="2"/><line x1="1226.60" y1="185.35" x2="1234.33" y2="187.42" stroke="#0c0c0c" stroke-width="2"/><line x1="1220.97" y1="204.90" x2="1225.30" y2="207.40" stroke="#0c0c0c" stroke-width="2"/><line x1="1206.85" y1="219.55" x2="1212.51" y2="225.21" stroke="#0c0c0c" stroke-width="2"/><text x="1104.3" y="220.4" font-size="11.8" text-anchor="middle" fill="#0c0c0c">0</text><text x="1086.8" y="189.9" font-size="11.8" text-anchor="middle" fill="#0c0c0c">1</text><text x="1086.6" y="153.9" font-size="11.8" text-anchor="middle" fill="#0c0c0c">2</text><text x="1104.8" y="123.8" font-size="11.8" text-anchor="middle" fill="#0c0c0c">3</text><text x="1134.6" y="105.8" font-size="11.8" text-anchor="middle" fill="#0c0c0c">4</text><text x="1171.0" y="105.8" font-size="11.8" text-anchor="middle" fill="#0c0c0c">5</text><text x="1200.9" y="123.8" font-size="11.8" text-anchor="middle" fill="#0c0c0c">6</text><text x="1218.2" y="154.3" font-size="11.8" text-anchor="middle" fill="#0c0c0c">7</text><text x="1218.2" y="189.9" font-size="11.8" text-anchor="middle" fill="#0c0c0c">8</text><text x="1200.9" y="220.4" font-size="11.8" text-anchor="middle" fill="#0c0c0c">9</text><text x="1152.4" y="119.6" font-size="7.2" font-weight="normal" text-anchor="middle" fill="#111" font-family="DejaVu Sans, sans-serif" letter-spacing="-0.5">x1000</text><text x="1152.4" y="135.2" font-size="10.1" text-anchor="middle" fill="#0c0c0c" font-family="DejaVu Sans Condensed, DejaVu Sans, sans-serif">RPM - engine</text><text x="1152.4" y="148.3" font-size="10.1" text-anchor="middle" fill="#0c0c0c" font-family="DejaVu Sans Condensed, DejaVu Sans, sans-serif">speed</text><text x="1152.4" y="202.3" font-size="12" text-anchor="middle" fill="#0c0c0c">0</text><text x="1152.4" y="216.3" font-size="11.7" text-anchor="middle" fill="#0c0c0c">RPM</text><path d="M1098.73 221.72 L1155.04 167.70 L1165.67 154.32 L1163.96 152.63 L1150.76 163.50 L1097.73 220.74 Z" fill="#d61c1c" fill-opacity="0.93"/><line x1="1098.23" y1="221.23" x2="1152.9" y2="165.6" stroke="#ee8888" stroke-width="0.9" stroke-opacity="0.75"/><circle cx="1152.9" cy="165.6" r="12.7" fill="url(#hga)" fill-opacity="0.93"/></svg>
<svg class="abs" style="left:1052px;top:468px" width="200" height="200" viewBox="1052 468 200 200" font-family="DejaVu Sans, Liberation Sans, sans-serif" font-weight="bold"><defs><radialGradient id="rgb" cx="1152.9" cy="568.4" r="98.5" gradientUnits="userSpaceOnUse"><stop offset="0.85" stop-color="#707070"/><stop offset="0.866" stop-color="#898989"/><stop offset="0.93" stop-color="#8b8b8b"/><stop offset="0.943" stop-color="#b2b2b2"/><stop offset="0.954" stop-color="#989898"/><stop offset="0.975" stop-color="#8a8a8a"/><stop offset="1" stop-color="#6a6a6a"/></radialGradient><radialGradient id="fgb" cx="1152.9" cy="568.4" r="84.5" gradientUnits="userSpaceOnUse"><stop offset="0" stop-color="#ffffff"/><stop offset="0.84" stop-color="#ffffff"/><stop offset="0.93" stop-color="#dadada"/><stop offset="1" stop-color="#a8a8a8"/></radialGradient><linearGradient id="hgb" x1="0" y1="0" x2="1" y2="1"><stop offset="0" stop-color="#000"/><stop offset="0.45" stop-color="#0a0a0a"/><stop offset="0.55" stop-color="#3a3a3a"/><stop offset="0.7" stop-color="#0a0a0a"/><stop offset="1" stop-color="#000"/></linearGradient></defs><circle cx="1152.9" cy="568.4" r="98.5" fill="url(#rgb)"/><circle cx="1152.9" cy="568.4" r="84.5" fill="url(#fgb)"/><path d="M1095.77 625.53 A80.8 80.8 0 0 1 1079.22 601.56" fill="none" stroke="#ff0000" stroke-width="7.2"/><path d="M1079.22 601.56 A80.8 80.8 0 0 1 1072.25 573.28" fill="none" stroke="#ffff00" stroke-width="7.2"/><path d="M1216.50 518.57 A80.8 80.8 0 0 1 1233.55 573.28" fill="none" stroke="#ffff00" stroke-width="7.2"/><path d="M1233.55 573.28 A80.8 80.8 0 0 1 1210.03 625.53" fill="none" stroke="#ff0000" stroke-width="7.2"/><line x1="1098.95" y1="622.35" x2="1093.29" y2="628.01" stroke="#0c0c0c" stroke-width="2"/><line x1="1088.21" y1="613.05" x2="1084.10" y2="615.89" stroke="#0c0c0c" stroke-width="2"/><line x1="1083.32" y1="599.71" x2="1076.03" y2="603.00" stroke="#0c0c0c" stroke-width="2"/><line x1="1076.58" y1="587.21" x2="1071.73" y2="588.41" stroke="#0c0c0c" stroke-width="2"/><line x1="1076.74" y1="573.01" x2="1068.75" y2="573.49" stroke="#0c0c0c" stroke-width="2"/><line x1="1074.87" y1="558.93" x2="1069.91" y2="558.32" stroke="#0c0c0c" stroke-width="2"/><line x1="1080.05" y1="545.70" x2="1072.42" y2="543.32" stroke="#0c0c0c" stroke-width="2"/><line x1="1083.30" y1="531.87" x2="1078.88" y2="529.55" stroke="#0c0c0c" stroke-width="2"/><line x1="1092.84" y1="521.34" x2="1086.54" y2="516.41" stroke="#0c0c0c" stroke-width="2"/><line x1="1100.78" y1="509.57" x2="1097.46" y2="505.82" stroke="#0c0c0c" stroke-width="2"/><line x1="1113.43" y1="503.10" x2="1109.29" y2="496.26" stroke="#0c0c0c" stroke-width="2"/><line x1="1125.03" y1="494.91" x2="1123.26" y2="490.23" stroke="#0c0c0c" stroke-width="2"/><line x1="1139.15" y1="493.35" x2="1137.70" y2="485.48" stroke="#0c0c0c" stroke-width="2"/><line x1="1152.90" y1="489.80" x2="1152.90" y2="484.80" stroke="#0c0c0c" stroke-width="2"/><line x1="1166.65" y1="493.35" x2="1168.10" y2="485.48" stroke="#0c0c0c" stroke-width="2"/><line x1="1180.77" y1="494.91" x2="1182.54" y2="490.23" stroke="#0c0c0c" stroke-width="2"/><line x1="1192.37" y1="503.10" x2="1196.51" y2="496.26" stroke="#0c0c0c" stroke-width="2"/><line x1="1205.02" y1="509.57" x2="1208.34" y2="505.82" stroke="#0c0c0c" stroke-width="2"/><line x1="1212.96" y1="521.34" x2="1219.26" y2="516.41" stroke="#0c0c0c" stroke-width="2"/><line x1="1222.50" y1="531.87" x2="1226.92" y2="529.55" stroke="#0c0c0c" stroke-width="2"/><line x1="1225.75" y1="545.70" x2="1233.38" y2="543.32" stroke="#0c0c0c" stroke-width="2"/><line x1="1230.93" y1="558.93" x2="1235.89" y2="558.32" stroke="#0c0c0c" stroke-width="2"/><line x1="1229.06" y1="573.01" x2="1237.05" y2="573.49" stroke="#0c0c0c" stroke-width="2"/><line x1="1229.22" y1="587.21" x2="1234.07" y2="588.41" stroke="#0c0c0c" stroke-width="2"/><line x1="1222.48" y1="599.71" x2="1229.77" y2="603.00" stroke="#0c0c0c" stroke-width="2"/><line x1="1217.59" y1="613.05" x2="1221.70" y2="615.89" stroke="#0c0c0c" stroke-width="2"/><line x1="1206.85" y1="622.35" x2="1212.51" y2="628.01" stroke="#0c0c0c" stroke-width="2"/><text x="1104.3" y="623.2" font-size="11.8" text-anchor="middle" fill="#0c0c0c">8</text><text x="1091.1" y="603.2" font-size="11.8" text-anchor="middle" fill="#0c0c0c">9</text><text x="1086.8" y="579.2" font-size="11.8" text-anchor="middle" fill="#0c0c0c">10</text><text x="1089.9" y="555.2" font-size="11.8" text-anchor="middle" fill="#0c0c0c">11</text><text x="1101.2" y="533.8" font-size="11.8" text-anchor="middle" fill="#0c0c0c">12</text><text x="1119.2" y="518.0" font-size="11.8" text-anchor="middle" fill="#0c0c0c">13</text><text x="1140.8" y="510.3" font-size="11.8" text-anchor="middle" fill="#0c0c0c">14</text><text x="1164.9" y="510.3" font-size="11.8" text-anchor="middle" fill="#0c0c0c">15</text><text x="1186.9" y="518.0" font-size="11.8" text-anchor="middle" fill="#0c0c0c">16</text><text x="1204.7" y="533.8" font-size="11.8" text-anchor="middle" fill="#0c0c0c">17</text><text x="1216.0" y="555.2" font-size="11.8" text-anchor="middle" fill="#0c0c0c">18</text><text x="1218.9" y="579.2" font-size="11.8" text-anchor="middle" fill="#0c0c0c">19</text><text x="1212.4" y="602.3" font-size="11.8" text-anchor="middle" fill="#0c0c0c">20</text><text x="1199.7" y="622.4" font-size="11.8" text-anchor="middle" fill="#0c0c0c">21</text><text x="1152.4" y="544" font-size="10.1" text-anchor="middle" fill="#0c0c0c" font-family="DejaVu Sans Condensed, DejaVu Sans, sans-serif">Battery</text><text x="1152.4" y="605.1" font-size="12" text-anchor="middle" fill="#0c0c0c">0.0</text><text x="1152.4" y="619.1" font-size="11.7" text-anchor="middle" fill="#0c0c0c">V</text><path d="M1100.84 629.15 L1155.16 570.37 L1164.98 556.38 L1163.17 554.80 L1150.64 566.43 L1099.78 628.22 Z" fill="#d61c1c" fill-opacity="0.93"/><line x1="1100.31" y1="628.69" x2="1152.9" y2="568.4" stroke="#ee8888" stroke-width="0.9" stroke-opacity="0.75"/><circle cx="1152.9" cy="568.4" r="12.7" fill="url(#hgb)" fill-opacity="0.93"/></svg>
<div class="abs" style="left:1220px;top:266px;width:33px;height:203px;background:linear-gradient(90deg,#eeeeee 31px,#fafafa 31px);border-bottom:2px solid #fafafa;box-sizing:border-box;"></div>
<div class="abs" style="left:1219px;top:669px;width:34px;height:203px;background:linear-gradient(90deg,#eeeeee 32px,#fafafa 32px);border-bottom:2px solid #fafafa;box-sizing:border-box;"></div>
<div class="abs" style="left:1051px;top:261px;width:169px;height:215px;background:#e81c24;overflow:hidden;"><div class="abs" style="left:5px;top:5px;width:159px;height:205px;background:#000;overflow:hidden;"><div class="abs" style="left:0;top:0px;width:159px;height:27px;background:#eeeeee;"></div><div class="th" style="left:0;top:0px;width:79px;">RPM</div><div class="th" style="left:80px;top:0px;width:80px;">Dwell</div><div class="td" style="left:0;top:27px;width:79px;background:#8a8aff;border-right:1px solid #7a8a99;padding-right:2px;">500</div><div class="td" style="left:79px;top:27px;width:80px;background:#ff8a8a;">2.50</div><div class="td" style="left:0;top:49px;width:79px;background:#8a9be6;border-right:1px solid #7a8a99;padding-right:2px;">1200</div><div class="td" style="left:79px;top:49px;width:80px;background:#d9ab8a;">2.40</div><div class="td" style="left:0;top:71px;width:79px;background:#8aaccb;border-right:1px solid #7a8a99;padding-right:2px;">2000</div><div class="td" style="left:79px;top:71px;width:80px;background:#b8cc8a;">2.30</div><div class="td" style="left:0;top:93px;width:79px;background:#8acbac;border-right:1px solid #7a8a99;padding-right:2px;">3000</div><div class="td" style="left:79px;top:93px;width:80px;background:#8af08a;">2.20</div><div class="td" style="left:0;top:115px;width:79px;background:#8af08a;border-right:1px solid #7a8a99;padding-right:2px;">4000</div><div class="td" style="left:79px;top:115px;width:80px;background:#8acbac;">2.10</div><div class="td" style="left:0;top:137px;width:79px;background:#accb8a;border-right:1px solid #7a8a99;padding-right:2px;">5000</div><div class="td" style="left:79px;top:137px;width:80px;background:#8acbac;">2.10</div><div class="td" style="left:0;top:159px;width:79px;background:#cbac8a;border-right:1px solid #7a8a99;padding-right:2px;">6000</div><div class="td" style="left:79px;top:159px;width:80px;background:#8aa6d2;">2.00</div><div class="td" style="left:0;top:181px;width:79px;background:#ff8a8a;border-right:1px solid #7a8a99;padding-right:2px;">7500</div><div class="td" style="left:79px;top:181px;width:80px;background:#8a8aff;">1.90</div></div></div>
<div class="abs" style="left:1050px;top:663px;width:169px;height:212px;background:#e81c24;overflow:hidden;"><div class="abs" style="left:5px;top:5px;width:159px;height:202px;background:#000;overflow:hidden;"><div class="abs" style="left:0;top:1px;width:159px;height:27px;background:#eeeeee;"></div><div class="th" style="left:0;top:1px;width:80px;">Battery ...</div><div class="th" style="left:81px;top:1px;width:79px;">Multiplier</div><div class="td" style="left:0;top:28px;width:80px;background:#8a8aff;border-right:1px solid #7a8a99;padding-right:2px;">8.0</div><div class="td" style="left:80px;top:28px;width:79px;background:#ff8a8a;">2.28</div><div class="td" style="left:0;top:50px;width:80px;background:#8aa6d2;border-right:1px solid #7a8a99;padding-right:2px;">10.0</div><div class="td" style="left:80px;top:50px;width:79px;background:#9ee08a;">1.62</div><div class="td" style="left:0;top:72px;width:80px;background:#8acbac;border-right:1px solid #7a8a99;padding-right:2px;">12.0</div><div class="td" style="left:80px;top:72px;width:79px;background:#8acbac;">1.26</div><div class="td" style="left:0;top:94px;width:80px;background:#8af08a;border-right:1px solid #7a8a99;padding-right:2px;">14.0</div><div class="td" style="left:80px;top:94px;width:79px;background:#8aa6d2;">1.00</div><div class="td" style="left:0;top:116px;width:80px;background:#b8cc8a;border-right:1px solid #7a8a99;padding-right:2px;">16.0</div><div class="td" style="left:80px;top:116px;width:79px;background:#8a97ec;">0.84</div><div class="td" style="left:0;top:138px;width:80px;background:#d9ab8a;border-right:1px solid #7a8a99;padding-right:2px;">18.0</div><div class="td" style="left:80px;top:138px;width:79px;background:#8a8aff;">0.70</div><div class="td" style="left:0;top:160px;width:80px;background:#ec9b8a;border-right:1px solid #7a8a99;padding-right:2px;">19.0</div><div class="td" style="left:80px;top:160px;width:79px;background:#8a8aff;">0.70</div><div class="td" style="left:0;top:182px;width:80px;background:#ff8a8a;border-right:1px solid #7a8a99;padding-right:2px;">20.0</div><div class="td" style="left:80px;top:182px;width:79px;background:#8a8aff;">0.70</div></div></div>
<div class="tb" style="left:1220px;top:267px;"><svg class="abs" style="left:1px;top:1px" width="21" height="22" viewBox="0 0 21 22"><circle cx="10.5" cy="10.8" r="10" fill="#050505"/><rect x="5.5" y="7.3" width="10" height="2.6" fill="#fff"/><rect x="5.5" y="11.6" width="10" height="2.6" fill="#fff"/></svg></div><div class="tb" style="left:1220px;top:296px;"><svg class="abs" style="left:1px;top:1px" width="21" height="22" viewBox="0 0 21 22"><rect x="0.5" y="1" width="20" height="20" rx="2.5" fill="#050505"/><path d="M10.5 17 L10.5 6 M5.5 10.5 L10.5 5.5 L15.5 10.5" stroke="#fff" stroke-width="2.4" fill="none" stroke-linecap="round" stroke-linejoin="round"/></svg></div><div class="tb" style="left:1220px;top:325px;"><svg class="abs" style="left:1px;top:1px" width="21" height="22" viewBox="0 0 21 22"><rect x="0.5" y="1" width="20" height="20" rx="2.5" fill="#050505"/><path d="M10.5 5 L10.5 16 M5.5 11.5 L10.5 16.5 L15.5 11.5" stroke="#fff" stroke-width="2.4" fill="none" stroke-linecap="round" stroke-linejoin="round"/></svg></div><div class="tb" style="left:1220px;top:354px;"><svg class="abs" style="left:1px;top:1px" width="21" height="22" viewBox="0 0 21 22"><circle cx="10.5" cy="10.8" r="10" fill="#050505"/><rect x="4.5" y="9.4" width="12" height="3.2" fill="#fff"/></svg></div><div class="tb" style="left:1220px;top:383px;"><svg class="abs" style="left:1px;top:1px" width="21" height="22" viewBox="0 0 21 22"><circle cx="10.5" cy="10.8" r="10" fill="#050505"/><rect x="4.5" y="9.5" width="12" height="3" fill="#fff"/><rect x="9" y="5" width="3" height="12" fill="#fff"/></svg></div><div class="tb" style="left:1220px;top:412px;"><svg class="abs" style="left:1px;top:1px" width="21" height="22" viewBox="0 0 21 22"><circle cx="10.5" cy="10.8" r="10" fill="#050505"/><path d="M6 6.5 L15 15.5 M15 6.5 L6 15.5" stroke="#fff" stroke-width="2.6" stroke-linecap="round"/></svg></div><div class="tb" style="left:1220px;top:441px;"><svg class="abs" style="left:1px;top:1px" width="21" height="22" viewBox="0 0 21 22"><defs><linearGradient id="pg" x1="0" y1="1" x2="1" y2="0"><stop offset="0.1" stop-color="#ff0000"/><stop offset="0.35" stop-color="#c00050"/><stop offset="0.6" stop-color="#5000b0"/><stop offset="0.85" stop-color="#0000ff"/></linearGradient></defs><path d="M6.3 15.3 L16 5.6" stroke="url(#pg)" stroke-width="3.7" stroke-linecap="square"/></svg></div>
<div class="tb" style="left:1220px;top:670px;"><svg class="abs" style="left:1px;top:1px" width="21" height="22" viewBox="0 0 21 22"><circle cx="10.5" cy="10.8" r="10" fill="#050505"/><rect x="5.5" y="7.3" width="10" height="2.6" fill="#fff"/><rect x="5.5" y="11.6" width="10" height="2.6" fill="#fff"/></svg></div><div class="tb" style="left:1220px;top:699px;"><svg class="abs" style="left:1px;top:1px" width="21" height="22" viewBox="0 0 21 22"><rect x="0.5" y="1" width="20" height="20" rx="2.5" fill="#050505"/><path d="M10.5 17 L10.5 6 M5.5 10.5 L10.5 5.5 L15.5 10.5" stroke="#fff" stroke-width="2.4" fill="none" stroke-linecap="round" stroke-linejoin="round"/></svg></div><div class="tb" style="left:1220px;top:728px;"><svg class="abs" style="left:1px;top:1px" width="21" height="22" viewBox="0 0 21 22"><rect x="0.5" y="1" width="20" height="20" rx="2.5" fill="#050505"/><path d="M10.5 5 L10.5 16 M5.5 11.5 L10.5 16.5 L15.5 11.5" stroke="#fff" stroke-width="2.4" fill="none" stroke-linecap="round" stroke-linejoin="round"/></svg></div><div class="tb" style="left:1220px;top:757px;"><svg class="abs" style="left:1px;top:1px" width="21" height="22" viewBox="0 0 21 22"><circle cx="10.5" cy="10.8" r="10" fill="#050505"/><rect x="4.5" y="9.4" width="12" height="3.2" fill="#fff"/></svg></div><div class="tb" style="left:1220px;top:786px;"><svg class="abs" style="left:1px;top:1px" width="21" height="22" viewBox="0 0 21 22"><circle cx="10.5" cy="10.8" r="10" fill="#050505"/><rect x="4.5" y="9.5" width="12" height="3" fill="#fff"/><rect x="9" y="5" width="3" height="12" fill="#fff"/></svg></div><div class="tb" style="left:1220px;top:815px;"><svg class="abs" style="left:1px;top:1px" width="21" height="22" viewBox="0 0 21 22"><circle cx="10.5" cy="10.8" r="10" fill="#050505"/><path d="M6 6.5 L15 15.5 M15 6.5 L6 15.5" stroke="#fff" stroke-width="2.6" stroke-linecap="round"/></svg></div><div class="tb" style="left:1220px;top:844px;"><svg class="abs" style="left:1px;top:1px" width="21" height="22" viewBox="0 0 21 22"><defs><linearGradient id="pg" x1="0" y1="1" x2="1" y2="0"><stop offset="0.1" stop-color="#ff0000"/><stop offset="0.35" stop-color="#c00050"/><stop offset="0.6" stop-color="#5000b0"/><stop offset="0.85" stop-color="#0000ff"/></linearGradient></defs><path d="M6.3 15.3 L16 5.6" stroke="url(#pg)" stroke-width="3.7" stroke-linecap="square"/></svg></div>
</body></html>
